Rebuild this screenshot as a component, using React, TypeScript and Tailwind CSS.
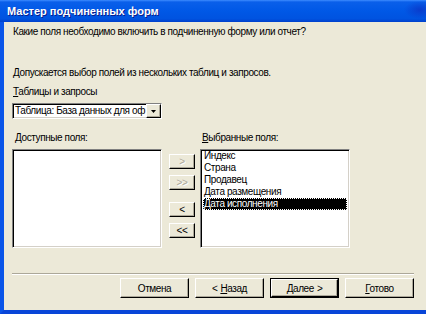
const face = "bg-[#ece9d8]";
const raised =
  "border border-t-white border-l-white border-b-black border-r-black shadow-[inset_-1px_-1px_0_#aca899]";
const sunken =
  "border border-t-[#808080] border-l-[#808080] border-b-white border-r-white shadow-[inset_1px_1px_0_#000,inset_-1px_-1px_0_#d4d0c8]";

function U({ children }: { children: string }) {
  return <span className="underline underline-offset-1">{children}</span>;
}

function SmallButton({ label, disabled }: { label: string; disabled?: boolean }) {
  return (
    <div
      className={`${raised} ${face} w-[26px] h-[15px] flex items-center justify-center text-[10px] leading-none ${
        disabled ? "text-[#aca899] [text-shadow:1px_1px_0_#fff]" : "text-black"
      }`}
    >
      {label}
    </div>
  );
}

function WizardButton({ children, isDefault }: { children: React.ReactNode; isDefault?: boolean }) {
  return (
    <div className={`w-[69px] h-[20px] ${isDefault ? "border border-black" : ""}`}>
      <div
        className={`${raised} ${face} w-full h-full flex items-center justify-center gap-[3px] text-black`}
      >
        {children}
      </div>
    </div>
  );
}

export default function App() {
  const selected = ["Индекс", "Страна", "Продавец", "Дата размещения", "Дата исполнения"];

  return (
    <div
      className="w-[426px] h-[314px] overflow-hidden flex flex-col bg-[#ece9d8] select-none"
      style={{ fontFamily: '"Liberation Sans", Arial, sans-serif' }}
    >
      {/* title bar */}
      <div className="h-[22px] shrink-0 flex items-center pl-[7px] bg-[radial-gradient(ellipse_16px_9px_at_420px_10px,#0a3ccc,transparent),linear-gradient(to_bottom,#3d8cff_0px,#0a5fea_2px,#0058e6_50%,#0053e0_85%,#0040cc_100%)]">
        <span className="text-white font-bold text-[11px] [text-shadow:1px_1px_0_#0a1e8c]">
          Мастер подчиненных форм
        </span>
      </div>

      {/* window frame: blue on the left and at the bottom */}
      <div className="flex-1 flex flex-col border-l-4 border-b-4 border-l-[#0a55e8] border-b-[#0845d8]">
        <div className="flex-1 flex flex-col pl-[8px] pr-[12px] text-[10px] tracking-[-0.4px] text-black leading-[13px]">
          <p className="mt-[3px] pl-[1px]">Какие поля необходимо включить в подчиненную форму или отчет?</p>

          <p className="mt-[28px] pl-[1px]">Допускается выбор полей из нескольких таблиц и запросов.</p>

          <p className="mt-[6px] pl-[1px]">
            <U>Т</U>аблицы и запросы
          </p>

          <div className={`${sunken} mt-[5px] w-[150px] h-[16px] bg-white flex items-center`}>
            <span className="flex-1 overflow-hidden whitespace-nowrap pl-[2px] leading-none">
              Таблица: База данных для оф
            </span>
            <div className={`${raised} ${face} w-[15px] h-[14px] shrink-0 flex items-center justify-center`}>
              <svg width="5" height="3" viewBox="0 0 5 3">
                <path d="M0 0h5L2.5 3z" fill="#000" />
              </svg>
            </div>
          </div>

          <div className="mt-[12px] flex">
            {/* available fields */}
            <div className="flex flex-col">
              <p className="pl-[3px]">
                <U>Д</U>оступные поля:
              </p>
              <div className={`${sunken} mt-[5px] w-[150px] h-[99px] bg-white`} />
            </div>

            {/* move buttons */}
            <div className="ml-[7px] mt-[23px] flex flex-col">
              <SmallButton label=">" disabled />
              <div className="mt-[6px]">
                <SmallButton label=">>" disabled />
              </div>
              <div className="mt-[12px]">
                <SmallButton label="<" />
              </div>
              <div className="mt-[6px]">
                <SmallButton label="<<" />
              </div>
            </div>

            {/* selected fields */}
            <div className="ml-[5px] flex flex-col">
              <p className="pl-[2px]">
                <U>В</U>ыбранные поля:
              </p>
              <div className={`${sunken} mt-[5px] w-[150px] h-[99px] bg-white px-[2px]`}>
                {selected.map((name, i) => (
                  <div
                    key={name}
                    className={`h-[12px] leading-[12px] pl-[1px] whitespace-nowrap ${
                      i === selected.length - 1
                        ? "bg-black text-white outline-1 outline-dotted outline-white -outline-offset-1"
                        : ""
                    }`}
                  >
                    {name}
                  </div>
                ))}
              </div>
            </div>
          </div>

          {/* separator */}
          <div className="mt-[25px] w-[402px] h-[2px] border-t border-t-[#aca899] border-b border-b-white" />

          <div className="mt-[3px] flex justify-end gap-[6px] w-[402px]">
            <WizardButton>
              <span>Отмена</span>
            </WizardButton>
            <WizardButton>
              <span>&lt;</span>
              <span>
                <U>Н</U>азад
              </span>
            </WizardButton>
            <WizardButton isDefault>
              <span>
                <U>Д</U>алее
              </span>
              <span>&gt;</span>
            </WizardButton>
            <WizardButton>
              <span>
                <U>Г</U>отово
              </span>
            </WizardButton>
          </div>
        </div>
      </div>
    </div>
  );
}
